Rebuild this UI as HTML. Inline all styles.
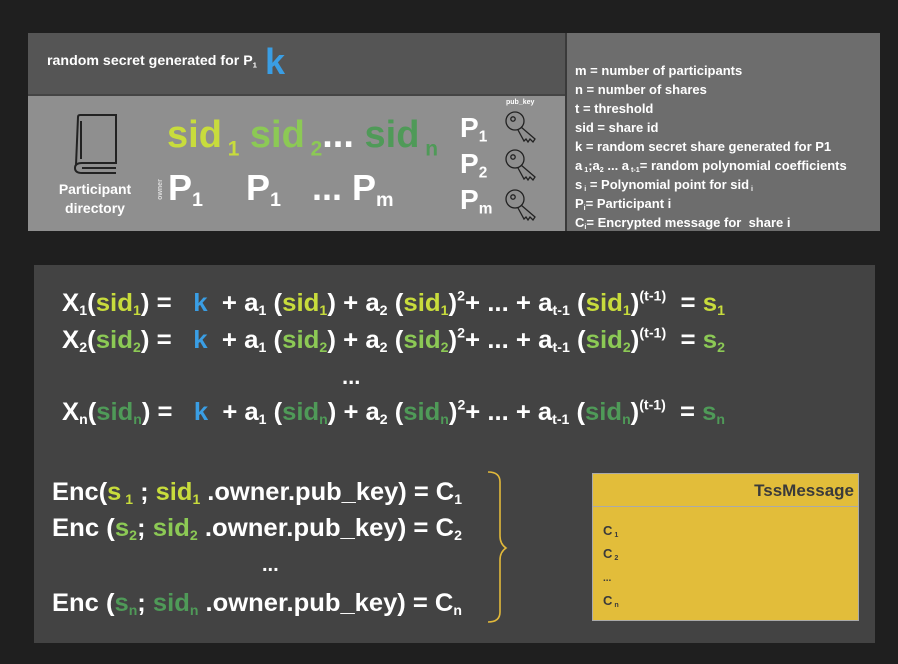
<!DOCTYPE html>
<html><head><meta charset="utf-8"><style>
*{margin:0;padding:0;box-sizing:border-box}
body{width:898px;height:664px;background:#1f1f1f;position:relative;overflow:hidden;font-family:"Liberation Sans",sans-serif;font-weight:bold;color:#fff}
.a{position:absolute;white-space:pre;line-height:1}
sub,sup{font-size:55%;line-height:0}
sub{vertical-align:-0.3em}
sup{vertical-align:0.75em}
.g1{color:#c8dc3c}.g2{color:#8cc955}.g3{color:#4f9a58}.kb{color:#3a9ee4}
.eq{font-size:25px;transform-origin:0 0}
</style></head><body>
<div class="a" style="left:28px;top:33px;width:537px;height:61px;background:#555"></div>
<div class="a" style="left:28px;top:94px;width:537px;height:137px;background:#8f8f8f;border-top:2px solid #444"></div>
<div class="a" style="left:565px;top:33px;width:315px;height:198px;background:#6d6d6d;border-left:2px solid #3a3a3a"></div>
<div class="a" style="left:34px;top:265px;width:841px;height:378px;background:#434343"></div>

<div class="a eq" data-w="210" style="left:47px;top:53px;font-size:14px">random secret generated for P<sub>1</sub></div>
<div class="a kb" style="left:265px;top:44px;font-size:36px">k</div>

<svg class="a" style="left:70px;top:113px" width="50" height="62" viewBox="0 0 50 62" fill="none" stroke="#222" stroke-width="2">
<path d="M8 4 Q8 2 10 2 L46 2 L46 50 L12 50 Q5 50 5 55 Q5 60 12 60 L46 60"/>
<path d="M8 4 L6 52"/><path d="M11 8 L11 46"/><path d="M12 55 L46 55"/>
</svg>
<div class="a" style="left:50px;top:180px;width:90px;text-align:center;font-size:14px;line-height:19px">Participant<br>directory</div>

<div class="a" style="left:167px;top:116px;font-size:38px"><span class="g1">sid<sub style="font-size:55%;vertical-align:-0.4em"> 1</sub></span> <span class="g2">sid<sub style="vertical-align:-0.4em"> 2</sub></span><span style="color:#fff">...</span> <span class="g3">sid<sub style="vertical-align:-0.4em"> n</sub></span></div>
<div class="a" style="left:150px;top:186px;font-size:7px;transform:rotate(-90deg);color:#ddd">owner</div>
<div class="a" style="left:168px;top:170px;font-size:36px">P<sub>1</sub></div>
<div class="a" style="left:246px;top:170px;font-size:36px">P<sub>1</sub></div>
<div class="a" style="left:312px;top:170px;font-size:36px">... P<sub>m</sub></div>

<div class="a" style="left:506px;top:99px;font-size:7px">pub_key</div>
<div class="a" style="left:460px;top:114px;font-size:28px">P<sub>1</sub></div>
<div class="a" style="left:460px;top:150px;font-size:28px">P<sub>2</sub></div>
<div class="a" style="left:460px;top:186px;font-size:28px">P<sub>m</sub></div>
<svg class="a" style="left:504px;top:110px" width="34" height="112" fill="none" stroke="#222" stroke-width="1.3">
<g id="key"><circle cx="11" cy="11" r="9"/><circle cx="9" cy="9" r="2.2"/><path d="M17 17 L31 29 L29 32 L26 29 L24 32 L22 29 L20 31 L14 20"/></g>
<use href="#key" y="38"/><use href="#key" y="78"/>
</svg>

<div class="a" style="left:575px;top:61px;font-size:13px;line-height:19px">m = number of participants
n = number of shares
t = threshold
sid = share id
k = random secret share generated for P1
a<sub> 1</sub>;a<sub>2</sub> ... a<sub> t-1</sub>= random polynomial coefficients
s<sub> i</sub> = Polynomial point for sid<sub> i</sub>
P<sub>i</sub>= Participant i
C<sub>i</sub>= Encrypted message for  share i</div>

<div class="a eq" data-w="663" style="left:62px;top:291px">X<sub>1</sub>(<span class="g1">sid<sub>1</sub></span>) =   <span class="kb">k</span>  + a<sub>1</sub> (<span class="g1">sid<sub>1</sub></span>) + a<sub>2</sub> (<span class="g1">sid<sub>1</sub></span>)<sup>2</sup>+ ... + a<sub>t-1</sub> (<span class="g1">sid<sub>1</sub></span>)<sup>(t-1)</sup>  = <span class="g1">s<sub>1</sub></span></div>
<div class="a eq" data-w="663" style="left:62px;top:328px">X<sub>2</sub>(<span class="g2">sid<sub>2</sub></span>) =   <span class="kb">k</span>  + a<sub>1</sub> (<span class="g2">sid<sub>2</sub></span>) + a<sub>2</sub> (<span class="g2">sid<sub>2</sub></span>)<sup>2</sup>+ ... + a<sub>t-1</sub> (<span class="g2">sid<sub>2</sub></span>)<sup>(t-1)</sup>  = <span class="g2">s<sub>2</sub></span></div>
<div class="a" style="left:342px;top:366px;font-size:22px">...</div>
<div class="a eq" data-w="663" style="left:62px;top:400px">X<sub>n</sub>(<span class="g3">sid<sub>n</sub></span>) =   <span class="kb">k</span>  + a<sub>1</sub> (<span class="g3">sid<sub>n</sub></span>) + a<sub>2</sub> (<span class="g3">sid<sub>n</sub></span>)<sup>2</sup>+ ... + a<sub>t-1</sub> (<span class="g3">sid<sub>n</sub></span>)<sup>(t-1)</sup>  = <span class="g3">s<sub>n</sub></span></div>

<div class="a eq" data-w="410" style="left:52px;top:480px">Enc(<span class="g1">s<sub> 1</sub></span> ; <span class="g1">sid<sub>1</sub></span> .owner.pub_key) = C<sub>1</sub></div>
<div class="a eq" data-w="410" style="left:52px;top:516px">Enc (<span class="g2">s<sub>2</sub></span>; <span class="g2">sid<sub>2</sub></span> .owner.pub_key) = C<sub>2</sub></div>
<div class="a" style="left:262px;top:555px;font-size:20px">...</div>
<div class="a eq" data-w="410" style="left:52px;top:591px">Enc (<span class="g3">s<sub>n</sub></span>; <span class="g3">sid<sub>n</sub></span> .owner.pub_key) = C<sub>n</sub></div>

<svg class="a" style="left:484px;top:470px" width="40" height="154" fill="none" stroke="#e2b93a" stroke-width="1.6">
<path d="M4 2 Q16 2 16 12 L16 66 Q16 74 22 78 Q16 82 16 90 L16 142 Q16 152 4 152"/>
</svg>

<div class="a" style="left:592px;top:473px;width:267px;height:148px;background:#e2bd3a;border:1px solid #aaa"></div>
<div class="a" style="left:593px;top:506px;width:265px;height:1px;background:#aaa"></div>
<div class="a" style="left:600px;top:482px;width:254px;text-align:right;font-size:17px;color:#3a3a3a">TssMessage</div>
<div class="a" style="left:603px;top:519px;font-size:13px;color:#3a3a3a;line-height:23px">C<sub> 1</sub>
C<sub> 2</sub>
<span style="font-size:10px">...</span>
</div>
<div class="a" style="left:603px;top:594px;font-size:13px;color:#3a3a3a">C<sub> n</sub></div>

<script>
document.querySelectorAll('[data-w]').forEach(function(e){var w=e.getBoundingClientRect().width;var t=+e.getAttribute('data-w');if(w>0)e.style.transform='scaleX('+(t/w)+')';});
</script>
</body></html>
